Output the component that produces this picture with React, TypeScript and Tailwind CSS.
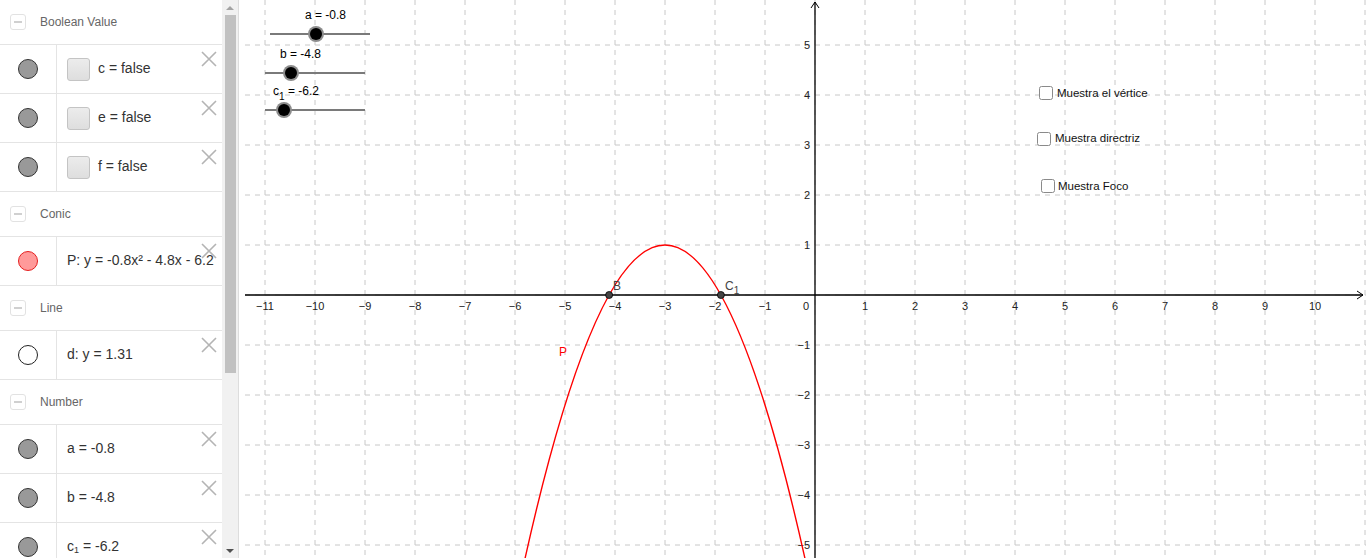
import React from 'react';

type Swatch = 'gray' | 'conic' | 'line';

const swatchClass: Record<Swatch, string> = {
  gray: 'bg-[#999999] border border-[#333333]',
  conic: 'bg-[#ff9a9a] border border-[#e52020]',
  line: 'bg-white border border-[#222222]',
};

function Header({ label }: { label: string }) {
  return (
    <div className="h-[45px] flex items-center pl-[10px] gap-[14px] border-b border-[#e4e4e4] shrink-0">
      <div className="w-[16px] h-[16px] rounded-[3px] border border-[#e2e2e2] flex items-center justify-center">
        <div className="w-[8px] h-[2px] bg-[#d0d0d0]" />
      </div>
      <span className="text-[12px] text-[#666666]">{label}</span>
    </div>
  );
}

function Row({
  swatch,
  checkbox,
  children,
}: {
  swatch: Swatch;
  checkbox?: boolean;
  children: React.ReactNode;
}) {
  return (
    <div className="relative h-[49px] flex border-b border-[#e4e4e4] shrink-0">
      <div className="w-[57px] shrink-0 border-r border-[#e4e4e4] flex items-center justify-center">
        <div className={`w-[20px] h-[20px] rounded-full ${swatchClass[swatch]}`} />
      </div>
      <div className="flex-1 flex items-center pl-[10px] gap-[8px] overflow-hidden whitespace-nowrap">
        {checkbox && (
          <div className="w-[23px] h-[23px] rounded-[3px] border border-[#c4c4c4] bg-gradient-to-b from-[#ececec] to-[#dedede] shrink-0" />
        )}
        <span className="text-[14px] text-[#333333] pb-[2px]">{children}</span>
      </div>
      <svg className="absolute top-[6px] right-[5px]" width="16" height="16" viewBox="0 0 16 16">
        <path d="M1 1L15 15M15 1L1 15" stroke="#b4b4b4" strokeWidth="1.6" fill="none" />
      </svg>
    </div>
  );
}

function AlgebraView() {
  return (
    <div className="w-[222px] h-full overflow-hidden bg-white">
      <div className="flex flex-col">
        <Header label="Boolean Value" />
        <Row swatch="gray" checkbox>c = false</Row>
        <Row swatch="gray" checkbox>e = false</Row>
        <Row swatch="gray" checkbox>f = false</Row>
        <Header label="Conic" />
        <Row swatch="conic">P: y = -0.8x² - 4.8x - 6.2</Row>
        <Header label="Line" />
        <Row swatch="line">d: y = 1.31</Row>
        <Header label="Number" />
        <Row swatch="gray">a = -0.8</Row>
        <Row swatch="gray">b = -4.8</Row>
        <Row swatch="gray">
          c<sub className="text-[9px]">1</sub> = -6.2
        </Row>
      </div>
    </div>
  );
}

function Scrollbar() {
  return (
    <div className="w-[16px] h-full bg-[#f1f1f1] flex flex-col items-center">
      <div className="h-[15px] flex items-center justify-center">
        <div className="w-0 h-0 border-l-[4px] border-r-[4px] border-b-[4px] border-l-transparent border-r-transparent border-b-[#a3a3a3]" />
      </div>
      <div className="w-[11px] h-[358px] bg-[#c1c1c1]" />
      <div className="flex-1" />
      <div className="h-[15px] flex items-center justify-center">
        <div className="w-0 h-0 border-l-[4px] border-r-[4px] border-t-[4px] border-l-transparent border-r-transparent border-t-[#505050]" />
      </div>
    </div>
  );
}

const OX = 815;
const OY = 295;
const U = 50;

function minus(n: number) {
  return n < 0 ? `\u2212${Math.abs(n)}` : `${n}`;
}

function Slider({ x1, x2, y, thumb }: { x1: number; x2: number; y: number; thumb: number }) {
  return (
    <g>
      <line x1={x1} y1={y} x2={x2} y2={y} stroke="#7a7a7a" strokeWidth="2" />
      <circle cx={thumb} cy={y} r="8" fill="#8c8c8c" />
      <circle cx={thumb} cy={y} r="6" fill="#000" />
    </g>
  );
}

function CheckBox({ x, y, tx, ty, label }: { x: number; y: number; tx: number; ty: number; label: string }) {
  return (
    <g>
      <rect x={x + 0.5} y={y + 0.5} width="13" height="13" rx="2" fill="#fff" stroke="#8a8a8a" />
      <text x={tx} y={ty} fontSize="11.5" fill="#111">
        {label}
      </text>
    </g>
  );
}

function GraphicsView() {
  const xs = Array.from({ length: 23 }, (_, i) => i - 11);
  const ys = Array.from({ length: 11 }, (_, i) => i - 5);
  const x0 = OX - 5.8 * U;
  const x1 = OX - 0.2 * U;
  const yEnd = OY + 5.272 * U;
  const ctrlY = OY - 7.272 * U;
  const bx = OX - 4.118 * U;
  const cx = OX - 1.882 * U;

  return (
    <div className="flex-1 h-full relative overflow-hidden bg-white">
      <svg width="1121" height="558" className="block font-['Liberation_Sans',Arial,sans-serif]">
        <g transform="translate(-245,0)">
          {/* grid */}
          {xs.map((k) => (
            <line
              key={`gx${k}`}
              x1={OX + k * U}
              y1={0}
              x2={OX + k * U}
              y2={558}
              stroke="#c8c8c8"
              strokeDasharray="5 5"
            />
          ))}
          {ys.map((k) => (
            <line
              key={`gy${k}`}
              x1={245}
              y1={OY - k * U}
              x2={1366}
              y2={OY - k * U}
              stroke="#c8c8c8"
              strokeDasharray="5 5"
            />
          ))}

          {/* axes */}
          <line x1={245} y1={OY} x2={1363} y2={OY} stroke="#000" strokeWidth="1.3" />
          <path d="M1357 291L1363 295L1357 299" stroke="#000" fill="none" />
          <line x1={OX} y1={2} x2={OX} y2={558} stroke="#000" strokeWidth="1.3" />
          <path d="M811 8L815 2L819 8" stroke="#000" fill="none" />

          {/* tick labels */}
          {xs
            .filter((k) => k !== 0 && k !== 11)
            .map((k) => (
              <text key={`lx${k}`} x={OX + k * U} y={OY + 15} fontSize="11" textAnchor="middle" fill="#222">
                {minus(k)}
              </text>
            ))}
          <text x={806} y={OY + 15} fontSize="11" textAnchor="middle" fill="#222">
            0
          </text>
          {ys
            .filter((k) => k !== 0)
            .map((k) => (
              <text key={`ly${k}`} x={OX - 5} y={OY - k * U + 4} fontSize="11" textAnchor="end" fill="#222">
                {minus(k)}
              </text>
            ))}

          {/* parabola */}
          <path
            d={`M${x0} ${yEnd} Q${OX - 3 * U} ${ctrlY} ${x1} ${yEnd}`}
            stroke="#ff0000"
            strokeWidth="1.4"
            fill="none"
          />
          <text x={559} y={356} fontSize="12" fill="#f00">
            P
          </text>

          {/* points */}
          <circle cx={bx} cy={OY} r="3.5" fill="#444" stroke="#000" strokeWidth="0.8" />
          <text x={613} y={290} fontSize="12" fill="#444">
            B
          </text>
          <circle cx={cx} cy={OY} r="3.5" fill="#444" stroke="#000" strokeWidth="0.8" />
          <text x={725} y={290} fontSize="12" fill="#444">
            C
            <tspan fontSize="10" dy="4">
              1
            </tspan>
          </text>

          {/* sliders */}
          <text x={305} y={19} fontSize="12" fill="#000">
            a = -0.8
          </text>
          <Slider x1={270} x2={370} y={34} thumb={316} />
          <text x={280} y={58} fontSize="12" fill="#000">
            b = -4.8
          </text>
          <Slider x1={265} x2={365} y={73} thumb={291} />
          <text x={273} y={95} fontSize="12" fill="#000">
            c
            <tspan fontSize="10" dy="5">
              1
            </tspan>
            <tspan dy="-5"> = -6.2</tspan>
          </text>
          <Slider x1={265} x2={365} y={110} thumb={284} />

          {/* check boxes */}
          <CheckBox x={1039} y={86} tx={1057} ty={97} label="Muestra el vértice" />
          <CheckBox x={1037} y={132} tx={1055} ty={142} label="Muestra directriz" />
          <CheckBox x={1041} y={179} tx={1058} ty={190} label="Muestra Foco" />
        </g>
      </svg>
    </div>
  );
}

export default function App() {
  return (
    <div className="w-[1366px] h-[558px] flex bg-white overflow-hidden font-['Liberation_Sans',Arial,sans-serif]">
      <AlgebraView />
      <Scrollbar />
      <div className="w-[7px] h-full border-l border-[#dddddd] bg-white" />
      <GraphicsView />
    </div>
  );
}
